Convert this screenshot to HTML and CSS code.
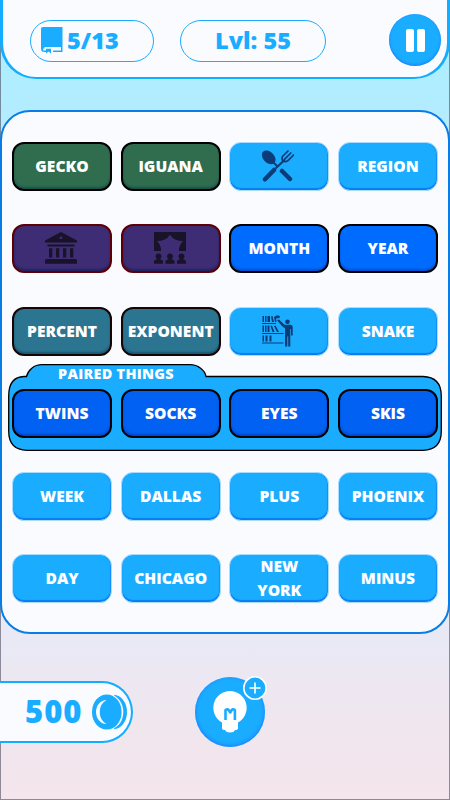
FILE: index.html
```html
<!DOCTYPE html>
<html lang="en">
<head>
    <meta charset="UTF-8">
    <meta name="viewport" content="width=device-width, initial-scale=1.0">
    <title>Word Groups</title>
    <link rel="stylesheet" href="styles.css">
</head>
<body>
    <div class="game">
        <header class="top-bar">
            <div class="pill progress">
                <svg class="book-icon" viewBox="0 0 22 27">
                    <path d="M2 0H21.500V20H3.500V21.500H2.200V23.500H5V25H3.500Q0 25 0 21.500V2Q0 0 2 0Z"/>
                    <path d="M12 23.500H20V20H21.500V25H12ZM5 21.800H10V26.500L7.500 24.500L5 26.500Z"/>
                </svg>
                <span>5/13</span>
            </div>
            <div class="pill level">Lvl: 55</div>
            <button class="pause" aria-label="Pause">
                <span class="bar"></span>
                <span class="bar"></span>
            </button>
        </header>

        <main class="board">
            <div class="row">
                <div class="tile green">GECKO</div>
                <div class="tile green">IGUANA</div>
                <div class="tile">
                    <svg class="icon" viewBox="0 0 32 32">
                        <ellipse cx="6.700" cy="7.300" rx="8" ry="5.500" transform="rotate(45 6.700 7.300)"/>
                        <path class="line thin" d="M11 12L15 16M22 10.500L14 18"/>
                        <path class="line thick" d="M20 21L28 29M12 20L3 29.300"/>
                        <path class="line tine" d="M26 1L20.500 6.500Q19 10 22 11.500Q24 12 26 10.500L31.500 5M28.800 3L22.500 9.300"/>
                    </svg>
                </div>
                <div class="tile">REGION</div>
            </div>
            <div class="row">
                <div class="tile purple">
                    <svg class="icon" viewBox="0 0 32 32">
                        <path fill-rule="evenodd" d="M16 0L32 8.500V10.500H0V8.500ZM16 4.500A1.500 1.200 0 1 0 16 6.900A1.500 1.200 0 1 0 16 4.500Z"/>
                        <path d="M2.500 12.500H29.500V14.500H2.500ZM4 16.300H7.300V25.500H4ZM11 16.300H14.300V25.500H11ZM18 16.300H21.300V25.500H18ZM25 16.300H28.300V25.500H25ZM1 27H31L32 28V31.700H0V28Z"/>
                    </svg>
                </div>
                <div class="tile purple">
                    <svg class="icon" viewBox="0 0 32 32">
                        <path d="M0 0H32V19H25Q24.500 14 29 9Q20 9 16 2.700Q12 9 3 9Q7.500 14 7 19H0Z"/>
                        <circle cx="4.500" cy="24.300" r="2.900"/>
                        <circle cx="16" cy="24.300" r="2.900"/>
                        <circle cx="27.500" cy="24.300" r="2.900"/>
                        <path d="M0 31.700V29.500Q0 27.500 4.500 27Q9 27.500 9 29.500V31.700ZM11.500 31.700V29.500Q11.500 27.500 16 27Q20.500 27.500 20.500 29.500V31.700ZM23 31.700V29.500Q23 27.500 27.500 27Q32 27.500 32 29.500V31.700Z"/>
                    </svg>
                </div>
                <div class="tile blue">MONTH</div>
                <div class="tile blue">YEAR</div>
            </div>
            <div class="row">
                <div class="tile teal">PERCENT</div>
                <div class="tile teal">EXPONENT</div>
                <div class="tile">
                    <svg class="icon" viewBox="0 0 32 32">
                        <path d="M0 8H14V9H0ZM0 18H21.500V19H0ZM0 27.500H21.500V28.500H0Z"/>
                        <path d="M.5 1H2V7H.5ZM3 1H4.500V7H3ZM5.500 1H8V7H5.500ZM9 1.500L10.500 1L12 7H10ZM12 2L15 .3L18 1L17.500 3L14 3.500L14.500 7H13ZM.5 10.500H2V17H.5ZM3 10.500H4.500V17H3ZM5.500 10.500H7.500V17H5.500ZM8.500 11L10 10.500L12.500 17H10.500ZM12 11L13.500 10.500L17 17H15ZM.5 20.500H2V26.500H.5ZM3.500 20.500H5.500V26.500H3.500ZM7.500 20.500H9.500V26.500H7.500Z"/>
                        <circle cx="25.500" cy="6.700" r="2.300"/>
                        <path d="M15 5L17 4.500L22.500 9.700H28.500Q30.700 9.700 30.700 12V20.500H29V14H28.300V31.500H26.200V21.500H25.300V31.500H23V13Q20 12 15 5Z"/>
                    </svg>
                </div>
                <div class="tile">SNAKE</div>
            </div>
            <div class="row group">
                <svg class="group-shape" viewBox="0 0 434 88">
                    <path d="M16 12.500H18.500C20 6 26 .7 34 .7H182C190 .7 197 6 198 12.500H415Q433.300 13 433.300 32V67Q433.300 86 415 86.300H19Q.7 86 .7 67V32Q.7 13 16 12.500Z"/>
                </svg>
                <span class="group-name">PAIRED THINGS</span>
                <div class="tile solved">TWINS</div>
                <div class="tile solved">SOCKS</div>
                <div class="tile solved">EYES</div>
                <div class="tile solved">SKIS</div>
            </div>
            <div class="row">
                <div class="tile">WEEK</div>
                <div class="tile">DALLAS</div>
                <div class="tile">PLUS</div>
                <div class="tile">PHOENIX</div>
            </div>
            <div class="row">
                <div class="tile">DAY</div>
                <div class="tile">CHICAGO</div>
                <div class="tile">NEW YORK</div>
                <div class="tile">MINUS</div>
            </div>
        </main>

        <footer class="bottom-bar">
            <div class="coins">
                <span>500</span>
                <svg class="coin-icon" viewBox="0 0 36 36">
                    <path d="M22 1A13 17 0 0 1 22 35Z"/>
                    <ellipse class="coin-edge" cx="17" cy="18" rx="14.300" ry="17.500"/>
                    <ellipse cx="14.800" cy="18" rx="14.800" ry="17.600"/>
                    <path class="shine" d="M14.500 6A10.500 12 0 0 0 14.500 30A12.500 13.500 0 0 1 14.500 6Z"/>
                </svg>
            </div>
            <button class="hint" aria-label="Hint">
                <svg class="bulb-icon" viewBox="0 0 34 42">
                    <path d="M17 0A16.800 16.800 0 0 1 25 31.500V37Q25 39 22 39Q21 41.500 17 41.500Q13 41.500 12 39Q9 39 9 37V31.500A16.800 16.800 0 0 1 17 0Z"/>
                    <path class="filament" d="M12.500 29V19Q14.800 17.500 16 19.500L17.200 21.500L18.400 19.500Q19.600 17.500 21.900 19V29"/>
                </svg>
                <svg class="plus" viewBox="0 0 24 24">
                    <circle cx="12" cy="12" r="11.200"/>
                    <path d="M12 7V17M7 12H17"/>
                </svg>
            </button>
        </footer>
    </div>
</body>
</html>
```
FILE: styles.css
```css
* {
    box-sizing: border-box;
}

body {
    margin: 0;
    font-family: "Open Sans", "Noto Sans", sans-serif;
    font-weight: 800;
}

button {
    padding: 0;
    border: none;
    cursor: pointer;
}

.game {
    width: 450px;
    height: 800px;
    overflow: hidden;
    display: flex;
    flex-direction: column;
    background: linear-gradient(#a5f0ff 0%, #b3ecff 13%, #e9e9f5 80%, #f0e6ee 91%, #f5e5ec 100%);
    box-shadow: inset 0 0 0 1px rgba(60, 60, 80, 0.55);
}

/* top bar */
.top-bar {
    height: 79px;
    flex-shrink: 0;
    display: flex;
    align-items: flex-start;
    padding: 14px 6px 0 27px;
    background: #fafbff;
    border: solid #12adff;
    border-width: 0 3px 2px;
    border-radius: 0 0 36px 36px;
}

.pill {
    height: 42px;
    margin-top: 6px;
    padding-bottom: 2px;
    display: flex;
    align-items: center;
    border: 1.5px solid #1aadff;
    border-radius: 21px;
    color: #1aadff;
    font-size: 23.5px;
}

.progress {
    width: 124px;
    padding-left: 10px;
    gap: 4px;
}

.book-icon {
    width: 22px;
    height: 27px;
    fill: #1aadff;
}

.level {
    width: 146px;
    margin-left: 26px;
    justify-content: center;
}

.pause {
    width: 52px;
    height: 52px;
    margin-left: auto;
    display: flex;
    align-items: center;
    justify-content: center;
    gap: 3px;
    border-radius: 50%;
    background: #1aadff;
    box-shadow: inset 0 -1px 3px #1a7aff;
}

.bar {
    width: 8px;
    height: 23px;
    border-radius: 2px;
    background: #fff;
}

/* board */
.board {
    height: 524px;
    flex-shrink: 0;
    margin-top: 31px;
    padding: 30px 10px 0;
    display: flex;
    flex-direction: column;
    gap: 33.4px;
    background: #fafbff;
    border: 2px solid #087de6;
    border-radius: 30px;
}

.row {
    height: 49px;
    display: grid;
    grid-template-columns: repeat(4, 100px);
    grid-template-rows: 49px;
    justify-content: space-between;
    position: relative;
}

.tile {
    display: flex;
    align-items: center;
    justify-content: center;
    padding: 0 20px 1px;
    border: 1.5px solid #a9dcff;
    border-radius: 12px;
    background: #1aadff;
    box-shadow: inset 0 -2px 1px #0b7cf0, inset -1px 0 1px #1790f8;
    color: #fff;
    font-size: 15.6px;
    line-height: 24px;
    text-align: center;
}

.green,
.purple,
.blue,
.teal,
.solved {
    border: 2px solid #000;
}

.green {
    background: #306d4f;
    box-shadow: inset 0 -2px 2px #17534f;
}

.purple {
    background: #3e2d75;
    border-color: #5c0006;
    box-shadow: inset 0 -2px 2px #202365;
}

.blue {
    background: #006cff;
    box-shadow: inset 0 -2px 2px #0052d2;
}

.teal {
    background: #2c7590;
    border-color: #170506;
    box-shadow: inset 0 -2px 2px #195774;
}

.solved {
    position: relative;
    background: #0061f3;
    box-shadow: inset 0 -2px 2px #0049c8;
}

.icon {
    width: 32px;
    height: 32px;
    flex-shrink: 0;
    margin-right: 2px;
    fill: #0b3c78;
}

.purple .icon {
    fill: #191329;
}

.line {
    fill: none;
    stroke: #0b3c78;
    stroke-linecap: round;
}

.thin {
    stroke-width: 2;
}

.thick {
    stroke-width: 4.5;
}

.tine {
    stroke-width: 1.7;
}

/* solved group */
.group-shape {
    position: absolute;
    left: -4px;
    top: -25px;
    width: 434px;
    height: 88px;
    fill: #1aadff;
    stroke: #000;
    stroke-width: 1.3;
}

.group-name {
    position: absolute;
    left: 46px;
    top: -25px;
    color: #fff;
    font-size: 14.4px;
    line-height: 20px;
    letter-spacing: 0.3px;
}

/* bottom bar */
.bottom-bar {
    display: flex;
    align-items: flex-start;
    padding-top: 43px;
}

.coins {
    width: 133px;
    height: 62px;
    margin-top: 4px;
    padding: 0 3px 2px 25px;
    display: flex;
    align-items: center;
    justify-content: space-between;
    background: #fafbff;
    border: 2px solid #12adff;
    border-left: none;
    border-radius: 0 31px 31px 0;
    color: #1aadff;
    font-size: 31px;
    letter-spacing: 1px;
}

.coin-icon {
    width: 36px;
    height: 36px;
    margin-top: 2px;
    fill: #1aadff;
}

.coin-edge,
.shine {
    fill: #fafbff;
}

.hint {
    position: relative;
    width: 70px;
    height: 70px;
    margin-left: 62px;
    display: flex;
    align-items: center;
    justify-content: center;
    border-radius: 50%;
    background: #1aadff;
    box-shadow: inset 0 -1px 4px #1a7aff;
}

.bulb-icon {
    width: 34px;
    height: 42px;
    fill: #fff;
}

.filament {
    fill: none;
    stroke: #1aadff;
    stroke-width: 2.6;
    stroke-linejoin: round;
}

.plus {
    position: absolute;
    right: -2px;
    top: -1px;
    width: 24px;
    height: 24px;
    fill: #1aadff;
    stroke: #fff;
    stroke-width: 1.6;
    stroke-linecap: round;
}
```
